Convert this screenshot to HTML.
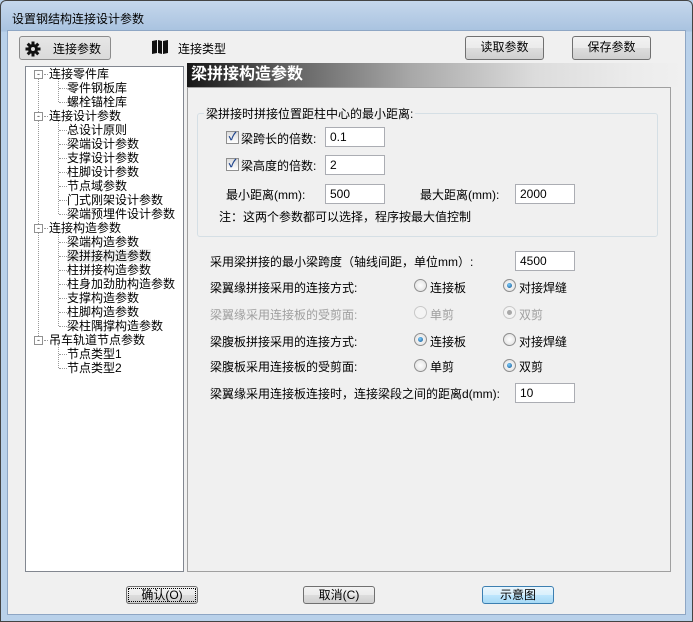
<!DOCTYPE html>
<html><head><meta charset="utf-8"><style>
*{margin:0;padding:0;box-sizing:border-box}
body{width:693px;height:622px;overflow:hidden;background:#b9d1ea;font-family:"Liberation Sans","Noto Sans CJK SC","WenQuanYi Zen Hei",sans-serif;font-size:12px;color:#000;position:relative}
.a{position:absolute;white-space:nowrap}
.win{position:absolute;left:0;top:0;width:693px;height:622px;border:1px solid #444;border-radius:6px 6px 0 0;background:linear-gradient(#c5d7ec,#a9c3e0 30px,#b9d1ea 31px)}
.client{position:absolute;left:7px;top:30px;width:679px;height:585px;background:#f0f0f0;border:1px solid #8ea6c4}
.btn{position:absolute;height:22px;border:1px solid #707070;border-radius:3px;background:linear-gradient(#f2f2f2,#ebebeb 50%,#dddddd 51%,#cfcfcf);text-align:center;line-height:20px}
.tb{font-size:12px}
.tree{position:absolute;left:25px;top:66px;width:159px;height:506px;background:#fff;border:1px solid #828790}
.t{position:absolute;white-space:nowrap;line-height:14px}
.pm{position:absolute;width:9px;height:9px;border:1px solid #919191;background:#fff;font-size:9px;line-height:6px;text-align:center;color:#333}
.vl{position:absolute;border-left:1px dotted #999;width:0}
.hl{position:absolute;border-top:1px dotted #999;height:0;width:8px}
.inp{position:absolute;height:20px;background:#fff;border:1px solid #abadb3;border-top-color:#abadb3;padding:2px 4px;font-size:12px;line-height:14px}
.cb{position:absolute;width:13px;height:13px;border:1px solid #8f8f8f;background:linear-gradient(#dcdcdc,#fff);font-size:11px;line-height:11px;text-align:center;color:#21458d;font-weight:bold}
.rd{position:absolute;width:13px;height:13px;border-radius:50%;border:1px solid #8f8f8f;background:radial-gradient(#fff,#dcdcdc)}
.rd.on::after{content:"";position:absolute;left:3px;top:3px;width:5px;height:5px;border-radius:50%;background:radial-gradient(circle at 40% 35%,#7fd0ff,#0d4e8a)}
.rd.dis{border-color:#c8c8c8;background:#f4f4f4}
.rd.dis.on::after{background:#a8a8a8}
.g{color:#a0a0a0}
</style></head><body>
<div class="win"></div>
<div class="a" style="left:12px;top:10px;font-size:12px">设置钢结构连接设计参数</div>
<div class="client"></div>

<div class="btn" style="left:19px;top:36px;width:92px;height:24px;border-color:#8c8c8c;background:linear-gradient(#e6e6e6,#dadada)"></div>
<svg class="a" style="left:25px;top:41px" width="16" height="16" viewBox="0 0 16 16"><g fill="#111"><circle cx="8" cy="8" r="5"/><rect x="6.5" y="0.5" width="3" height="15"/><rect x="0.5" y="6.5" width="15" height="3"/><rect x="6.5" y="0.5" width="3" height="15" transform="rotate(45 8 8)"/><rect x="6.5" y="0.5" width="3" height="15" transform="rotate(-45 8 8)"/></g><circle cx="8" cy="8" r="2" fill="#ddd"/></svg>
<div class="a tb" style="left:53px;top:40px">连接参数</div>
<svg class="a" style="left:152px;top:40px" width="16" height="14" viewBox="0 0 16 14"><path d="M0 1 L5 0 L5 13 L0 14Z M6 0 L10 1 L10 14 L6 13Z M11 1 L16 0 L16 13 L11 14Z" fill="#111"/></svg>
<div class="a tb" style="left:178px;top:40px">连接类型</div>
<div class="btn" style="left:465px;top:36px;width:79px;height:24px">读取参数</div>
<div class="btn" style="left:572px;top:36px;width:79px;height:24px">保存参数</div>

<div class="tree"></div>
<div id="tr"></div>

<div class="a" style="left:187px;top:63px;width:498px;height:24px;background:linear-gradient(90deg,#161616,#5a5a5a 18%,#a8a8a8 45%,#dcdcdc 70%,#ececec 90%,#f0f0f0)"></div>
<div class="a" style="left:191px;top:64px;font-size:16px;font-weight:bold;color:#fff;line-height:22px">梁拼接构造参数</div>
<div class="a" style="left:187px;top:87px;width:484px;height:485px;border:1px solid #a0a0a0"></div>

<div class="a" style="left:197px;top:113px;width:461px;height:124px;border:1px solid #d5dfe5;border-radius:3px"></div>
<div class="a" style="left:204px;top:105px;background:#f0f0f0;padding:0 2px">梁拼接时拼接位置距柱中心的最小距离:</div>
<div class="cb" style="left:226px;top:131px">✓</div>
<div class="a" style="left:241px;top:130px">梁跨长的倍数:</div>
<div class="inp" style="left:325px;top:127px;width:60px">0.1</div>
<div class="cb" style="left:226px;top:158px">✓</div>
<div class="a" style="left:241px;top:157px">梁高度的倍数:</div>
<div class="inp" style="left:325px;top:155px;width:60px">2</div>
<div class="a" style="left:226px;top:186px">最小距离(mm):</div>
<div class="inp" style="left:325px;top:184px;width:60px">500</div>
<div class="a" style="left:420px;top:186px">最大距离(mm):</div>
<div class="inp" style="left:515px;top:184px;width:60px">2000</div>
<div class="a" style="left:219px;top:208px">注：这两个参数都可以选择，程序按最大值控制</div>

<div class="a" style="left:210px;top:253px">采用梁拼接的最小梁跨度（轴线间距，单位mm）:</div>
<div class="inp" style="left:515px;top:251px;width:60px">4500</div>

<div class="a" style="left:210px;top:279px">梁翼缘拼接采用的连接方式:</div>
<div class="rd" style="left:414px;top:279px"></div><div class="a" style="left:430px;top:279px">连接板</div>
<div class="rd on" style="left:503px;top:279px"></div><div class="a" style="left:519px;top:279px">对接焊缝</div>

<div class="a g" style="left:210px;top:306px">梁翼缘采用连接板的受剪面:</div>
<div class="rd dis" style="left:414px;top:306px"></div><div class="a g" style="left:430px;top:306px">单剪</div>
<div class="rd dis on" style="left:503px;top:306px"></div><div class="a g" style="left:519px;top:306px">双剪</div>

<div class="a" style="left:210px;top:333px">梁腹板拼接采用的连接方式:</div>
<div class="rd on" style="left:414px;top:333px"></div><div class="a" style="left:430px;top:333px">连接板</div>
<div class="rd" style="left:503px;top:333px"></div><div class="a" style="left:519px;top:333px">对接焊缝</div>

<div class="a" style="left:210px;top:358px">梁腹板采用连接板的受剪面:</div>
<div class="rd" style="left:414px;top:359px"></div><div class="a" style="left:430px;top:358px">单剪</div>
<div class="rd on" style="left:503px;top:359px"></div><div class="a" style="left:519px;top:358px">双剪</div>

<div class="a" style="left:210px;top:385px">梁翼缘采用连接板连接时，连接梁段之间的距离d(mm):</div>
<div class="inp" style="left:515px;top:383px;width:60px">10</div>

<div class="btn" style="left:126px;top:586px;width:72px;height:18px;line-height:16px;outline:1px dotted #000;outline-offset:-3px">确认(O)</div>
<div class="btn" style="left:303px;top:586px;width:72px;height:18px;line-height:16px">取消(C)</div>
<div class="btn" style="left:482px;top:586px;width:72px;height:18px;line-height:16px;border-color:#3c7fb1;background:linear-gradient(#eaf6fd,#d9f0fc 50%,#bee6fd 51%,#a7d9f5)">示意图</div>

<script>
var items=[[0,"连接零件库"],[1,"零件钢板库"],[1,"螺栓锚栓库"],[0,"连接设计参数"],[1,"总设计原则"],[1,"梁端设计参数"],[1,"支撑设计参数"],[1,"柱脚设计参数"],[1,"节点域参数"],[1,"门式刚架设计参数"],[1,"梁端预埋件设计参数"],[0,"连接构造参数"],[1,"梁端构造参数"],[1,"梁拼接构造参数"],[1,"柱拼接构造参数"],[1,"柱身加劲肋构造参数"],[1,"支撑构造参数"],[1,"柱脚构造参数"],[1,"梁柱隅撑构造参数"],[0,"吊车轨道节点参数"],[1,"节点类型1"],[1,"节点类型2"]];
var h="",y0=67,lastRoot=0;
var roots=[];items.forEach(function(it,i){if(!it[0])roots.push(i)});
// root vertical line
h+='<div class="vl" style="left:38px;top:79px;height:'+(roots[roots.length-1]*14-7)+'px"></div>';
items.forEach(function(it,i){
 var y=y0+i*14;
 if(it[0]==0){
  h+='<div class="pm" style="left:34px;top:'+(y+3)+'px">-</div>';
  h+='<div class="hl" style="left:44px;top:'+(y+7)+'px;width:4px"></div>';
  h+='<div class="t" style="left:49px;top:'+y+'px">'+it[1]+'</div>';
  var n=0;for(var j=i+1;j<items.length&&items[j][0];j++)n++;
  h+='<div class="vl" style="left:58px;top:'+(y+12)+'px;height:'+(n*14-5)+'px"></div>';
 }else{
  h+='<div class="hl" style="left:59px;top:'+(y+7)+'px"></div>';
  var bg=it[1]=="梁拼接构造参数"?"background:#f0f0f0;":"";
  h+='<div class="t" style="left:67px;top:'+y+'px;'+bg+'">'+it[1]+'</div>';
 }
});
document.getElementById("tr").innerHTML=h;
</script>
</body></html>
